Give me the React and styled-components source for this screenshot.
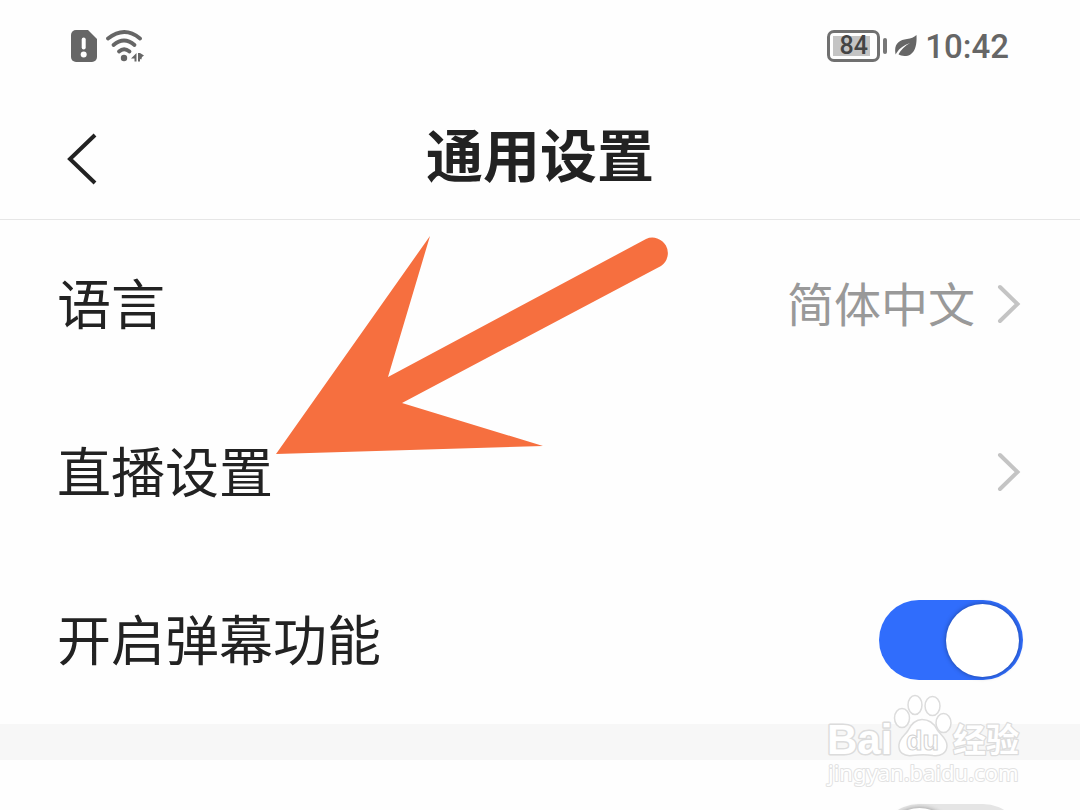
import React, { useState } from "react";
import styled, { createGlobalStyle } from "styled-components";

const GlobalStyle = createGlobalStyle`
  * {
    box-sizing: border-box;
  }

  body {
    margin: 0;
    background: #fefefe;
    color: #222;
    font-family: Roboto, "Noto Sans CJK SC", sans-serif;
  }
`

const Page = styled.div`
  position: relative;
  height: 100vh;
  overflow: hidden;
`

const StatusBar = styled.div`
  display: flex;
  align-items: center;
  justify-content: space-between;
  height: 92px;
  padding: 0 71px;
  color: #666;
`

const StatusGroup = styled.div`
  display: flex;
  align-items: center;
  gap: ${props => props.$gap}px;
`

const Battery = styled.div`
  display: flex;
  align-items: center;
  gap: 3px;

  &::after {
    content: "";
    width: 4px;
    height: 16px;
    border-radius: 2px;
    background: #777;
  }
`

const BatteryLevel = styled.span`
  display: flex;
  align-items: center;
  justify-content: center;
  width: 53px;
  height: 32px;
  border: 3px solid #707070;
  border-radius: 7px;
  background: linear-gradient(#c4c4c4, #c4c4c4) 3px center / 37px 20px no-repeat;
  color: #444;
  font-size: 25px;
  font-weight: 500;
  line-height: 26px;
`

const Time = styled.time`
  padding-top: 2px;
  font-size: 33px;
  font-weight: 500;
  line-height: 40px;
`

const Header = styled.header`
  display: grid;
  grid-template-columns: 1fr auto 1fr;
  align-items: center;
  height: 128px;
  padding: 0 58px;
  border-bottom: 1px solid #e6e6e6;
`

const BackButton = styled.button`
  justify-self: start;
  display: flex;
  padding: 6px 8px 0;
  border: 0;
  background: none;
  color: #222;
`

const Title = styled.h1`
  margin: 0;
  padding-top: 4px;
  font-size: 57px;
  font-weight: 700;
  line-height: 80px;
`

const rowStyles = `
  display: flex;
  align-items: center;
  justify-content: space-between;
  width: 100%;
  height: 168px;
  padding: 0 57px;
`

const LinkRow = styled.a`
  ${rowStyles}
  color: inherit;
  text-decoration: none;
`

const SwitchRow = styled.label`
  ${rowStyles}
`

const Label = styled.span`
  padding-top: 6px;
  font-size: 54px;
  line-height: 80px;
`

const Value = styled.span`
  padding-top: 4px;
  color: #999;
  font-size: 47px;
  line-height: 70px;
`

const RowEnd = styled.span`
  display: flex;
  align-items: center;
  gap: 22px;
`

const Switch = styled.input`
  appearance: none;
  display: flex;
  align-items: center;
  width: 144px;
  height: 80px;
  margin: 0;
  padding: 0 4px;
  border-radius: 40px;
  background: #e5e5e5;

  &::before {
    content: "";
    width: 73px;
    height: 73px;
    border-radius: 50%;
    background: #fff;
    box-shadow: 0 0 5px rgba(0, 0, 0, 0.4);
  }

  &:checked {
    justify-content: flex-end;
    background: #306dfc;
  }
`

const Divider = styled.div`
  height: 36px;
  background: #f7f7f7;
`

const Pointer = styled.svg`
  position: absolute;
  top: 236px;
  left: 276px;
  pointer-events: none;
`

const Watermark = styled.svg`
  position: absolute;
  top: 690px;
  right: 50px;
  pointer-events: none;
`

function SimIcon() {
  return (
    <svg width="26" height="32" viewBox="0 0 26 32">
      <path d="M5 0h12l9 9v18a5 5 0 0 1-5 5H5a5 5 0 0 1-5-5V5a5 5 0 0 1 5-5z" fill="#666" />
      <rect x="10.700" y="7.500" width="4" height="12" rx="2" fill="#fff" />
      <circle cx="12.700" cy="24.500" r="3" fill="#fff" />
    </svg>
  )
}

function WifiIcon() {
  return (
    <svg width="40" height="32" viewBox="0 0 40 32" fill="none" stroke="#666" strokeWidth="3.800" strokeLinecap="round">
      <path d="M2 8.500Q18.500-4.500 34 8.500" />
      <path d="M7.500 15Q18 6 28.500 15" />
      <path d="M13 21.500Q18 17 23.500 21.500" />
      <circle cx="18" cy="28" r="3.200" fill="#666" stroke="none" />
      <path d="M30.500 23v8.500h-2v-3H25zM32 23h2l4 2.500-2 1.500-.7 2.500-1.300-.5v2.500h-2z" fill="#666" stroke="none" />
    </svg>
  )
}

function LeafIcon() {
  return (
    <svg width="22" height="22" viewBox="0 0 22 22">
      <path d="M21.500 0C22 9 20.500 21 9.500 21c-2.500 0-4.500-.6-6-1.700C6 14.500 10 11 15 8 9 10 4.500 13 1.500 18L.6 19.500C-1.500 9 4 5 12 4c4-.6 7-1.500 9.500-4z" fill="#666" />
    </svg>
  )
}

function Chevron() {
  return (
    <svg width="26" height="40" viewBox="0 0 26 40" fill="none" stroke="#c4c4c4" strokeWidth="4" strokeLinecap="round">
      <path d="M3 3L20.500 20 3 37" />
    </svg>
  )
}

function BaiduMark() {
  return (
    <Watermark width="206" height="104" viewBox="0 0 206 104" fill="#fff" stroke="#dcdcdc" strokeWidth="1.500">
      <g fontWeight="700" paintOrder="stroke" strokeLinejoin="round">
        <text x="3" y="64" fontFamily="Liberation Sans, sans-serif" fontSize="42" strokeWidth="3">Bai</text>
        <text x="129" y="62" fontFamily="Noto Sans CJK SC, sans-serif" fontSize="33" strokeWidth="2.500">经验</text>
        <text x="4" y="91" fontFamily="Noto Sans, sans-serif" fontSize="22" fontWeight="400" stroke="#e2e2e2" strokeWidth="2">jingyan.baidu.com</text>
      </g>
      <ellipse cx="78" cy="28" rx="7.500" ry="9.500" />
      <ellipse cx="91" cy="15" rx="7" ry="9.500" />
      <ellipse cx="108.500" cy="16" rx="7.500" ry="9.500" />
      <ellipse cx="119.500" cy="33" rx="7.500" ry="9.500" />
      <path d="M98 29.500c8 0 12 4 15 10 4 6 10 9 10 16 0 8-7 11-14 10-8-1.500-14-1-21 0-8 1-14-3-13-11 1-7 6-9 9-14 3-6 7-11 14-11z" />
      <text x="82" y="60" fontFamily="Liberation Sans, sans-serif" fontSize="27" fontWeight="700" stroke="#d2d2d2" strokeWidth="1">du</text>
    </Watermark>
  )
}

export default function App() {
  const [danmaku, setDanmaku] = useState(true)
  const [other, setOther] = useState(false)

  return (
    <>
      <GlobalStyle />
      <Page>
        <StatusBar>
          <StatusGroup $gap={9}>
            <SimIcon />
            <WifiIcon />
          </StatusGroup>
          <StatusGroup $gap={8}>
            <Battery><BatteryLevel>84</BatteryLevel></Battery>
            <LeafIcon />
            <Time>10:42</Time>
          </StatusGroup>
        </StatusBar>

        <Header>
          <BackButton type="button" aria-label="返回">
            <svg width="34" height="52" viewBox="0 0 34 52" fill="none" stroke="#222" strokeWidth="4">
              <path d="M29 2L4 26l25 24" />
            </svg>
          </BackButton>
          <Title>通用设置</Title>
        </Header>

        <main>
          <LinkRow href="#language">
            <Label>语言</Label>
            <RowEnd><Value>简体中文</Value><Chevron /></RowEnd>
          </LinkRow>
          <LinkRow href="#live">
            <Label>直播设置</Label>
            <RowEnd><Chevron /></RowEnd>
          </LinkRow>
          <SwitchRow>
            <Label>开启弹幕功能</Label>
            <Switch type="checkbox" role="switch" checked={danmaku} onChange={e => setDanmaku(e.target.checked)} />
          </SwitchRow>
          <Divider />
          <SwitchRow>
            <Label />
            <Switch type="checkbox" role="switch" aria-label="开关" checked={other} onChange={e => setOther(e.target.checked)} />
          </SwitchRow>
        </main>

        <Pointer width="394" height="220" viewBox="0 0 394 220" fill="#f66f3f">
          <path d="M0 218L154 0l-42 141L370 3a15.500 15.500 0 0 1 15 27L126 167l141 43z" />
        </Pointer>
        <BaiduMark />
      </Page>
    </>
  )
}
